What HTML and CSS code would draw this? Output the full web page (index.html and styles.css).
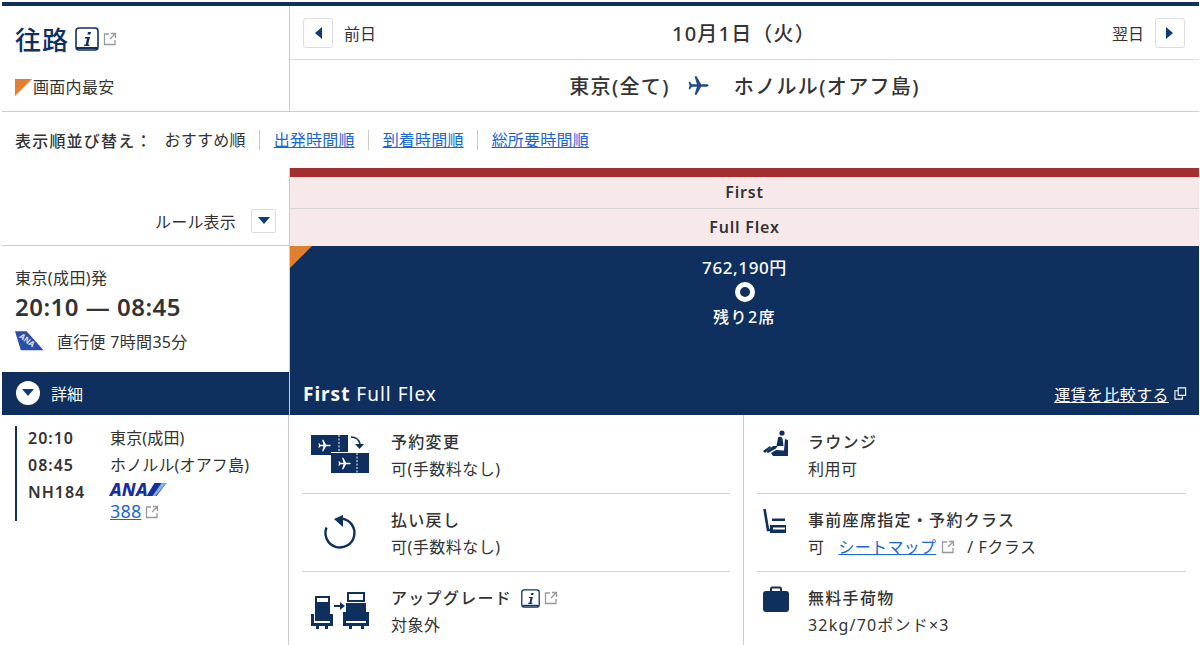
FILE: index.html
```html
<!DOCTYPE html>
<html lang="ja">
<head>
    <meta charset="utf-8">
    <title>往路</title>
    <link rel="stylesheet" href="styles.css">
</head>
<body>
<svg class="defs" width="0" height="0">
    <symbol id="plane" viewBox="0 0 24 24"><path d="M23.500 12c0-.8-1-1.300-2.500-1.300h-6L9.800 1.500H7.500l2.700 9.200H4.500L2.300 7.800H.8l1 4.200-1 4.200h1.500l2.200-2.900h5.700L7.500 22.500h2.300l5.200-9.200h6c1.500 0 2.500-.5 2.500-1.300z"/></symbol>
    <symbol id="ext" viewBox="0 0 14 14"><path d="M6 2H1.500v10.500H12V8" fill="none" stroke="#999" stroke-width="1.300"/><path d="M7 7l5-5M8 1.500h4.500V6" fill="none" stroke="#999" stroke-width="1.300"/></symbol>
    <symbol id="info" viewBox="0 0 24 24"><rect x="1" y="1" width="22" height="22" rx="3" fill="#fff" stroke="#0f2f5f" stroke-width="1.600"/><rect x="2" y="20" width="20" height="2" fill="#0f2f5f"/><path d="M13 5h3l-.6 2.600h-3zM10 10h5l-1.900 7.500h1.500l-.4 1.500H9l.4-1.500h1.300l1.300-6H9.700z" fill="#0f2f5f"/></symbol>
</svg>

<div class="page">
    <header class="head">
        <div class="head-left">
            <div class="title-row">
                <h1>往路</h1>
                <svg class="ico-info-lg"><use href="#info"/></svg>
                <svg class="ico-ext"><use href="#ext"/></svg>
            </div>
            <div class="cheapest"><span class="corner-sm"></span>画面内最安</div>
        </div>
        <div class="head-right">
            <div class="date-row">
                <div class="day-nav">
                    <span class="day-btn"><span class="tri-left"></span></span>
                    <span>前日</span>
                </div>
                <div class="date">10月1日（火）</div>
                <div class="day-nav">
                    <span>翌日</span>
                    <span class="day-btn"><span class="tri-right"></span></span>
                </div>
            </div>
            <div class="route-row">
                <span>東京(全て)</span>
                <svg class="route-plane"><use href="#plane"/></svg>
                <span>ホノルル(オアフ島)</span>
            </div>
        </div>
    </header>

    <nav class="sort">
        <b class="sort-label">表示順並び替え：</b>
        <span class="sort-item">おすすめ順</span>
        <a class="sort-item" href="#">出発時間順</a>
        <a class="sort-item" href="#">到着時間順</a>
        <a class="sort-item" href="#">総所要時間順</a>
    </nav>

    <div class="fare-table">
        <div class="rule">
            <span>ルール表示</span>
            <span class="rule-btn"><span class="tri-down"></span></span>
        </div>
        <div class="fare-head">
            <div class="red-bar"></div>
            <div class="cabin">First</div>
            <div class="brand">Full Flex</div>
        </div>

        <div class="flight">
            <div class="dep">東京(成田)発</div>
            <div class="times">20:10 — 08:45</div>
            <div class="direct">
                <svg class="tail" viewBox="0 0 30 20"><path d="M0 0h12l17.500 19.500H6z" fill="#2a4ea6"/><text class="tail-text" x="4" y="6" transform="rotate(38 4 6)">ANA</text></svg>
                <span>直行便 7時間35分</span>
            </div>
        </div>
        <div class="price-cell">
            <span class="corner-lg"></span>
            <div class="price">762,190円</div>
            <div class="ring"></div>
            <div class="seats">残り2席</div>
        </div>

        <div class="detail-bar">
            <span class="circle-btn"><span class="tri-down"></span></span>
            <span>詳細</span>
        </div>
        <div class="fare-bar">
            <div class="fare-name"><b>First</b> Full Flex</div>
            <a class="compare" href="#">運賃を比較する</a>
            <svg class="ico-win" viewBox="0 0 14 14"><path d="M4.500 1h8v8h-8zM4 4H1v9h8v-3" fill="none" stroke="#fff" stroke-width="1.200"/></svg>
        </div>

        <div class="legs">
            <div class="legs-inner">
                <b>20:10</b><span>東京(成田)</span>
                <b>08:45</b><span>ホノルル(オアフ島)</span>
                <b>NH184</b>
                <div class="carrier">
                    <div class="ana-logo"><i>ANA</i><svg viewBox="0 0 20 14"><path d="M8 0h12L10 13H0z" fill="#1a2d9c"/><path d="M15 0h5L9 13H6z" fill="#7fb0e8"/></svg></div>
                    <div class="aircraft"><a href="#">388</a><svg class="ico-ext"><use href="#ext"/></svg></div>
                </div>
            </div>
        </div>

        <div class="rules">
            <div class="rules-col">
                <div class="item">
                    <svg class="item-ico" viewBox="0 0 60 40">
                        <path d="M0 0h37v20H0z" fill="#0f2f5f"/><path d="M20 17h38v21H20z" fill="#fff"/><path d="M20 18h38v20H20z" fill="#0f2f5f"/>
                        <path d="M28 0v18M46 18v20" stroke="#fff" stroke-dasharray="2 1.500" fill="none"/>
                        <use href="#plane" x="7" y="4" width="13" height="13" fill="#fff"/>
                        <use href="#plane" x="27" y="22" width="13" height="13" fill="#fff"/>
                        <path d="M40 2c5 0 8 3 9 7" stroke="#0f2f5f" stroke-width="1.600" fill="none"/><path d="M44 9h9l-4.500 5z" fill="#0f2f5f"/>
                    </svg>
                    <div class="item-text"><b>予約変更</b><span>可(手数料なし)</span></div>
                </div>
                <div class="item">
                    <svg class="item-ico" viewBox="0 0 60 40">
                        <path d="M31 5.600A14.500 14.500 0 1 1 15.500 14.500" fill="none" stroke="#0f2f5f" stroke-width="2.400"/>
                        <path d="M23 6l9-4v12z" fill="#0f2f5f"/>
                    </svg>
                    <div class="item-text"><b>払い戻し</b><span>可(手数料なし)</span></div>
                </div>
                <div class="item">
                    <svg class="item-ico" viewBox="0 0 60 40">
                        <path d="M4 4h15v25H4zM0 22h3v9h16v-9h3v12h-5v3h-3v-3H8v3H5v-3H0z" fill="#0f2f5f"/>
                        <path d="M6 6h11v4H6z" fill="#fff"/>
                        <path d="M23 13h6v-3l5 4-5 4v-3h-6z" fill="#0f2f5f"/>
                        <path d="M36 0h18v10H36zM35 11h20v18H35zM32 20h3v11h20V20h3v14h-5v3h-3v-3H41v3h-3v-3h-6z" fill="#0f2f5f"/>
                        <path d="M38 2h14v6H38z" fill="#fff"/>
                    </svg>
                    <div class="item-text">
                        <div class="item-title"><b>アップグレード</b><svg class="ico-info"><use href="#info"/></svg><svg class="ico-ext"><use href="#ext"/></svg></div>
                        <span>対象外</span>
                    </div>
                </div>
            </div>
            <div class="rules-col">
                <div class="item">
                    <svg class="item-ico-sm" viewBox="0 0 26 26">
                        <circle cx="19" cy="3" r="2.600" fill="#0f2f5f"/>
                        <path d="M15 7.500c1.500-1.500 4-1 4.500 1l1 7.500h-6L13 18.500l-8 4.500-1.500-1.500L10 16h3.500z" fill="#0f2f5f"/>
                        <path d="M22 9l3 1v16H10l-2-3 5-3 8 .5zM0 21l7-5 1 1.500-6 5.500z" fill="#0f2f5f"/>
                    </svg>
                    <div class="item-text"><b>ラウンジ</b><span>利用可</span></div>
                </div>
                <div class="item">
                    <svg class="item-ico-sm" viewBox="0 0 26 26">
                        <path d="M1.500 1L5 22h17" fill="none" stroke="#0f2f5f" stroke-width="2.600"/>
                        <path d="M9 10.500h13V13H9zM7 17h16v8H7z" fill="#0f2f5f"/>
                        <path d="M10 19.500h12v2H10z" fill="#fff"/>
                    </svg>
                    <div class="item-text"><b>事前座席指定・予約クラス</b><div class="seat-line"><span>可</span><a href="#">シートマップ</a><svg class="ico-ext"><use href="#ext"/></svg><span>/ Fクラス</span></div></div>
                </div>
                <div class="item">
                    <svg class="item-ico-sm" viewBox="0 0 26 26">
                        <path d="M8 6V3a1.500 1.500 0 0 1 1.500-1.500h7A1.500 1.500 0 0 1 18 3v3" fill="none" stroke="#0f2f5f" stroke-width="2"/>
                        <rect x="0" y="5" width="26" height="21" rx="3" fill="#0f2f5f"/>
                    </svg>
                    <div class="item-text"><b>無料手荷物</b><span class="bag">32kg/70ポンド×3</span></div>
                </div>
            </div>
        </div>
    </div>
</div>
</body>
</html>
```

FILE: styles.css
```css
html, body {
    margin: 0;
    padding: 0;
    height: 645px;
    overflow: hidden;
    background-color: #fff;
    color: #333;
    font-family: "Noto Sans", "Noto Sans CJK JP", sans-serif;
    font-size: 16px;
}

.defs {
    position: absolute;
}

.page {
    margin: 2px 1px 0 2px;
    border-top: 4px solid #0f2f5f;
}

a {
    color: #1a66d6;
}

b {
    font-weight: 700;
}

/* header */
.head {
    display: grid;
    grid-template-columns: 288px 1fr;
    height: 105px;
    border-bottom: 1px solid #ccc;
}

.head-left {
    border-right: 1px solid #ccc;
    padding-left: 13px;
}

.title-row {
    display: flex;
    align-items: center;
    height: 48px;
    margin-top: 9px;
}

h1 {
    margin: 0;
    font-size: 26px;
    font-weight: 500;
    color: #0f2f5f;
    letter-spacing: 1px;
}

.ico-info-lg {
    width: 24px;
    height: 24px;
    margin-left: 6px;
}

.title-row .ico-ext {
    margin-left: 4px;
}

.ico-ext {
    width: 14px;
    height: 14px;
}

.cheapest {
    display: flex;
    align-items: center;
    margin-top: 14px;
    line-height: 20px;
    letter-spacing: 0.300px;
}

.corner-sm {
    width: 0;
    height: 0;
    border-top: 17px solid #e07f2f;
    border-right: 17px solid transparent;
    margin-right: 1px;
}

.date-row {
    display: flex;
    align-items: center;
    justify-content: space-between;
    height: 54px;
    padding: 0 14px 0 13px;
    border-bottom: 1px solid #ddd;
    box-sizing: border-box;
}

.day-nav {
    display: flex;
    align-items: center;
    gap: 11px;
}

.day-btn {
    display: flex;
    align-items: center;
    justify-content: center;
    width: 30px;
    height: 30px;
    border: 1px solid #ddd;
    border-radius: 3px;
    box-sizing: border-box;
}

.tri-left {
    border-top: 6px solid transparent;
    border-bottom: 6px solid transparent;
    border-right: 7px solid #0f3a7a;
}

.tri-right {
    border-top: 6px solid transparent;
    border-bottom: 6px solid transparent;
    border-left: 7px solid #0f3a7a;
}

.tri-down {
    border-left: 6px solid transparent;
    border-right: 6px solid transparent;
    border-top: 7px solid #0f3a7a;
}

.date {
    font-size: 20px;
    font-weight: 500;
    letter-spacing: 1.200px;
}

.route-row {
    display: flex;
    align-items: center;
    justify-content: center;
    gap: 18px;
    height: 50px;
    font-size: 20px;
    font-weight: 500;
    letter-spacing: 1.350px;
}

.route-plane {
    width: 21px;
    height: 21px;
    margin-right: 7px;
    fill: #1f4a86;
}

/* sort row */
.sort {
    display: flex;
    align-items: center;
    height: 56px;
    padding-left: 13px;
}

.sort-label {
    font-weight: 500;
    margin-right: 12px;
    letter-spacing: 1.200px;
}

.sort-item {
    padding: 0 13.500px;
    border-left: 1px solid #ccc;
    line-height: 20px;
    letter-spacing: 0.200px;
}

.sort-label + .sort-item {
    padding-left: 0;
    border-left: 0;
}

/* fares */
.fare-table {
    display: grid;
    grid-template-columns: 287px 1fr;
    grid-template-rows: 78px 126px 43px auto;
}

.rule {
    display: flex;
    align-items: center;
    justify-content: flex-end;
    gap: 15px;
    padding: 28px 13px 0 0;
    border-bottom: 1px solid #ccc;
    box-sizing: border-box;
    letter-spacing: 0.200px;
}

.rule-btn {
    display: flex;
    align-items: center;
    justify-content: center;
    width: 25px;
    height: 24px;
    border: 1px solid #ddd;
    border-radius: 2px;
    box-sizing: border-box;
}

.fare-head {
    background-color: #f7e9e9;
    border-left: 1px solid #ccc;
    text-align: center;
    font-weight: 600;
    letter-spacing: 0.800px;
}

.red-bar {
    height: 9px;
    background-color: #a32e2e;
}

.cabin {
    height: 32px;
    line-height: 31px;
    border-bottom: 1px solid #d4d4d4;
    box-sizing: border-box;
}

.brand {
    line-height: 36px;
}

.flight {
    padding: 21px 0 0 13px;
}

.dep {
    line-height: 22px;
    letter-spacing: 0.400px;
}

.times {
    font-size: 24px;
    font-weight: 600;
    letter-spacing: 0.500px;
    line-height: 34px;
    margin-top: 1px;
}

.direct {
    display: flex;
    align-items: center;
    gap: 13px;
    margin-top: 5px;
    letter-spacing: 0.300px;
}

.tail {
    width: 29px;
    height: 20px;
}

.tail-text {
    fill: #dfe6f5;
    font-size: 8px;
    font-weight: 700;
    letter-spacing: 0;
}

.price-cell {
    position: relative;
    background-color: #0f2f5f;
    border-left: 1px solid #ccc;
    color: #fff;
    text-align: center;
    padding-top: 11px;
    box-sizing: border-box;
}

.corner-lg {
    position: absolute;
    left: 0;
    top: 0;
    border-top: 22px solid #e07f2f;
    border-right: 22px solid transparent;
}

.price {
    font-size: 17px;
    line-height: 22px;
    font-weight: 500;
    letter-spacing: 0.600px;
}

.ring {
    width: 10px;
    height: 10px;
    border: 5px solid #fff;
    border-radius: 50%;
    margin: 3px auto 0;
}

.seats {
    margin-top: 4px;
    line-height: 22px;
    font-weight: 500;
    letter-spacing: 1.500px;
}

.detail-bar {
    display: flex;
    align-items: center;
    gap: 11px;
    background-color: #0f2f5f;
    color: #fff;
    padding: 0 0 2px 14px;
    box-sizing: border-box;
}

.circle-btn {
    display: flex;
    align-items: center;
    justify-content: center;
    width: 24px;
    height: 24px;
    border-radius: 50%;
    background-color: #fff;
}

.fare-bar {
    display: flex;
    align-items: center;
    background-color: #0f2f5f;
    color: #fff;
    padding: 0 12px 0 13px;
    border-left: 1px solid #ccc;
}

.fare-name {
    font-size: 19px;
    letter-spacing: 1px;
    flex: 1;
}

.compare {
    color: #fff;
    letter-spacing: 0.400px;
}

.ico-win {
    width: 13px;
    height: 13px;
    margin-left: 5px;
}

.legs {
    padding: 11px 0 0 13px;
    border-right: 1px solid #ccc;
    height: 230px;
    box-sizing: border-box;
}

.legs-inner {
    display: grid;
    grid-template-columns: 82px 1fr;
    grid-auto-rows: 27px;
    align-items: start;
    border-left: 2px solid #0f2f5f;
    padding-left: 11px;
    height: 95px;
    line-height: 24px;
    letter-spacing: 0.150px;
}

.legs-inner b {
    font-weight: 600;
    letter-spacing: 1px;
}

.carrier {
    line-height: 20px;
    padding-top: 2px;
}

.aircraft {
    margin-top: 4px;
    font-size: 18px;
}

.aircraft .ico-ext {
    margin-left: 4px;
    vertical-align: -1px;
}

.ana-logo {
    display: flex;
    align-items: center;
    height: 15px;
    color: #1a2d9c;
    font-weight: 800;
    font-size: 18px;
    line-height: 15px;
}

.ana-logo svg {
    width: 21px;
    height: 14px;
    margin-left: -2px;
}

.rules {
    display: grid;
    grid-template-columns: 454px 1fr;
}

.rules-col {
    padding: 1px 13px 0;
}

.rules-col + .rules-col {
    border-left: 1px solid #ccc;
}

.item {
    display: flex;
    align-items: center;
    height: 78px;
    padding-top: 1px;
    border-bottom: 1px solid #d4d4d4;
    box-sizing: border-box;
}

.item:last-child {
    border-bottom: 0;
}

.item-ico {
    width: 60px;
    height: 40px;
    margin: 0 20px 0 9px;
    flex: none;
}

.item-ico-sm {
    width: 26px;
    height: 26px;
    margin: 13px 19px 0 6px;
    align-self: flex-start;
    flex: none;
}

.item-text {
    display: flex;
    flex-direction: column;
    gap: 5px;
    line-height: 22px;
}

.item-text b {
    font-weight: 500;
    letter-spacing: 1.300px;
}

.item-text span {
    letter-spacing: 0.500px;
}

.item-text .bag {
    letter-spacing: 1.200px;
}

.item-title, .seat-line {
    display: flex;
    align-items: center;
}

.ico-info {
    width: 19px;
    height: 19px;
    margin-left: 9px;
}

.item-title .ico-ext {
    margin-left: 4px;
}

.seat-line a {
    margin-left: 14px;
    letter-spacing: 0.300px;
}

.seat-line .ico-ext {
    margin: 0 12px 0 5px;
}
```
